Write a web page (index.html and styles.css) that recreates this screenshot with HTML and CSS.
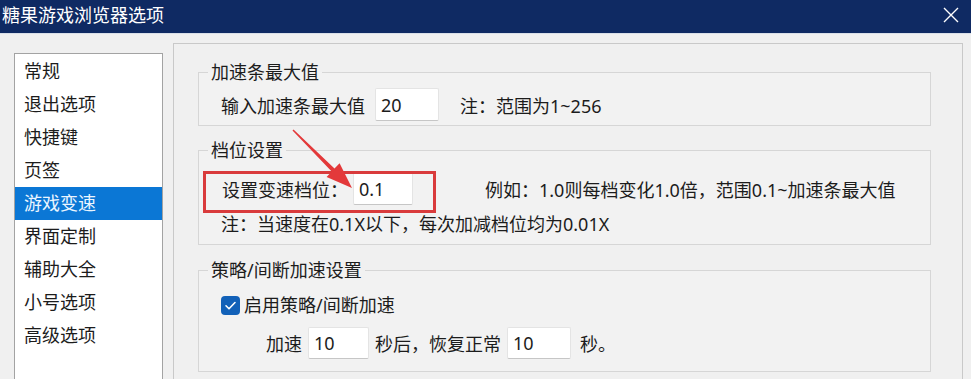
FILE: index.html
```html
<!DOCTYPE html>
<html lang="zh-CN">
<head>
<meta charset="utf-8">
<title>糖果游戏浏览器选项</title>
<link rel="stylesheet" href="styles.css">
</head>
<body>
<div class="window">
  <header class="titlebar">
    <span class="title">糖果游戏浏览器选项</span>
    <svg class="close" width="16" height="16" viewBox="0 0 16 16" aria-hidden="true">
      <path d="M1 1 L15 15 M15 1 L1 15" stroke="#ffffff" stroke-width="1.4" fill="none"/>
    </svg>
  </header>
  <div class="main">
    <aside class="sidebar">
      <ul class="nav">
        <li>常规</li>
        <li>退出选项</li>
        <li>快捷键</li>
        <li>页签</li>
        <li class="active">游戏变速</li>
        <li>界面定制</li>
        <li>辅助大全</li>
        <li>小号选项</li>
        <li>高级选项</li>
      </ul>
    </aside>
    <section class="panel">
      <fieldset class="group g1">
        <legend>加速条最大值</legend>
        <div class="row">
          <span>输入加速条最大值</span>
          <span class="field f-max">20</span>
          <span class="note">注：范围为1~256</span>
        </div>
      </fieldset>
      <fieldset class="group g2">
        <legend>档位设置</legend>
        <div class="row step-row">
          <span>设置变速档位：</span>
          <span class="field f-step">0.1</span>
          <span class="example">例如：1.0则每档变化1.0倍，范围0.1~加速条最大值</span>
        </div>
        <div class="row line">注：当速度在0.1X以下，每次加减档位均为0.01X</div>
      </fieldset>
      <fieldset class="group g3">
        <legend>策略/间断加速设置</legend>
        <div class="row line check-row">
          <svg class="checkbox" width="19" height="19" viewBox="0 0 19 19" aria-hidden="true">
            <rect x="0" y="0" width="19" height="19" rx="4" fill="#1261b8"/>
            <path d="M5 9.8 L8 12.8 L14 6.5" stroke="#ffffff" stroke-width="1.6" fill="none" stroke-linecap="round" stroke-linejoin="round"/>
          </svg>
          <span class="check-label">启用策略/间断加速</span>
        </div>
        <div class="row timing">
          <span>加速</span>
          <span class="field f-a">10</span>
          <span>秒后，恢复正常</span>
          <span class="field f-b">10</span>
          <span class="sec">秒。</span>
        </div>
      </fieldset>
    </section>
  </div>
  <div class="annot-box"></div>
  <svg class="annot-arrow" width="971" height="379" viewBox="0 0 971 379" aria-hidden="true">
    <polygon points="293.5,129.5 334.5,168.6 339.6,163.2 352,188 326.6,177 331.7,171.6 292.5,130.5" fill="#e3393a"/>
  </svg>
</div>
</body>
</html>
```

FILE: styles.css
```css
html, body {
  margin: 0;
  padding: 0;
  background: #f0f0f0;
}

body {
  font-family: "Noto Sans", "Noto Sans CJK SC", sans-serif;
  font-size: 18px;
  color: #1c1c1c;
}

.window {
  position: relative;
  width: 971px;
  height: 379px;
  overflow: hidden;
  background: #f0f0f0;
}

.titlebar {
  height: 34px;
  background: #0f2a63;
  display: flex;
  align-items: center;
  justify-content: space-between;
  padding: 0 12px 0 2px;
  box-sizing: border-box;
  border-bottom: 1px solid #d9dfe8;
}

.title {
  color: #ffffff;
  font-size: 18px;
  line-height: 30px;
  padding-bottom: 3px;
}

.close {
  display: block;
  margin-bottom: 4px;
}

.main {
  display: flex;
  height: 345px;
}

.sidebar {
  width: 159px;
  padding: 19px 0 0 14px;
  box-sizing: content-box;
  flex: none;
}

.nav {
  list-style: none;
  margin: 0;
  padding: 1px 0 0 0;
  width: 149px;
  height: 340px;
  box-sizing: border-box;
  background: #ffffff;
  border: 1px solid #a3a3a3;
}

.nav li {
  height: 33px;
  line-height: 33px;
  padding-left: 9px;
  white-space: nowrap;
}

.nav li.active {
  background: #0b77d5;
  color: #eaf5ff;
}

.panel {
  margin-top: 9px;
  width: 790px;
  box-sizing: border-box;
  border: 1px solid #c9c9c9;
  border-bottom: none;
  padding: 17px 31px 0 24px;
  background: #f0f0f0;
}

.group {
  margin: 0;
  width: 733px;
  box-sizing: border-box;
  min-width: 0;
  border: 1px solid #d6d6d6;
  background: #f2f2f2;
  padding: 5px 0 4px 9px;
}

.group legend {
  padding: 0 3px;
  line-height: 22px;
  font-size: 18px;
}

.g1 {
  margin-bottom: 13px;
}

.g2 {
  margin-bottom: 14px;
  padding-top: 11px;
  padding-bottom: 8px;
}

.g3 {
  padding-top: 12px;
  padding-bottom: 12px;
}

.row {
  display: flex;
  align-items: center;
  height: 33px;
  padding-left: 13px;
  white-space: nowrap;
}

.row.line {
  height: 24px;
  line-height: 24px;
}

.g2 .row.line {
  margin-top: 7px;
}

.field {
  display: inline-flex;
  align-items: center;
  height: 33px;
  box-sizing: border-box;
  background: #ffffff;
  border: 1px solid #e4e4e4;
  border-bottom-color: #c6c6c6;
  border-radius: 2px;
  padding-left: 5px;
}

.f-max {
  width: 64px;
  margin-left: 10px;
}

.note {
  margin-left: 21px;
}

.step-row {
  padding-left: 14px;
}

.f-step {
  width: 60px;
  margin-left: 5px;
}

.example {
  margin-left: 72px;
}

.checkbox {
  display: block;
  flex: none;
}

.check-label {
  margin-left: 4px;
}

.timing {
  margin-top: 10px;
  height: 32px;
  padding-left: 58px;
}

.timing .field {
  height: 32px;
}

.f-a {
  width: 61px;
  margin: 0 6px;
}

.f-b {
  width: 64px;
  margin-left: 6px;
}

.sec {
  margin-left: 9px;
}

.annot-box {
  position: absolute;
  left: 203px;
  top: 171px;
  width: 233px;
  height: 42px;
  box-sizing: border-box;
  border: 3px solid #d93b3c;
  pointer-events: none;
}

.annot-arrow {
  position: absolute;
  left: 0;
  top: 0;
  pointer-events: none;
}
```
